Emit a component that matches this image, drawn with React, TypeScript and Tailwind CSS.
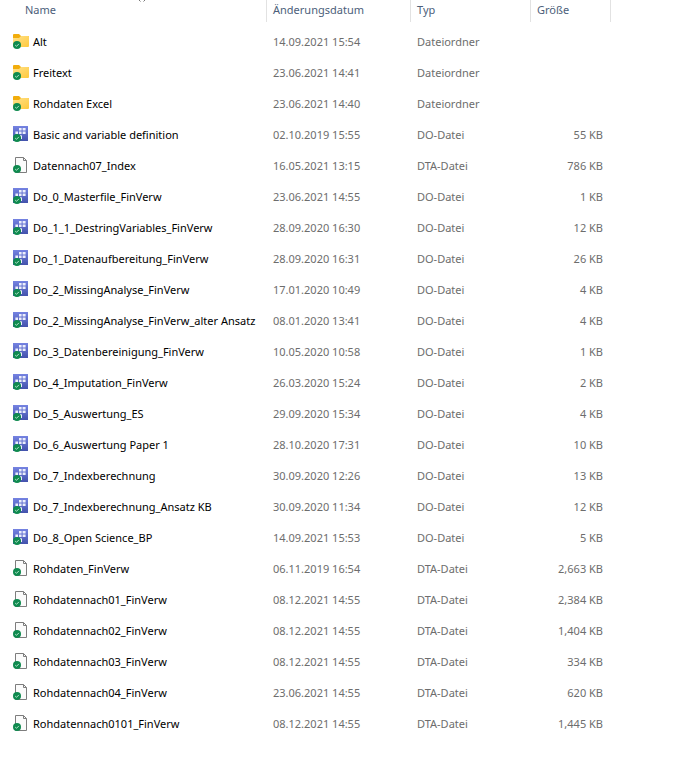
import React from "react";

type Kind = "folder" | "do" | "dta";

interface Entry {
  name: string;
  date: string;
  kind: Kind;
  size?: string;
}

const typeLabel: Record<Kind, string> = {
  folder: "Dateiordner",
  do: "DO-Datei",
  dta: "DTA-Datei",
};

const entries: Entry[] = [
  { name: "Alt", date: "14.09.2021 15:54", kind: "folder" },
  { name: "Freitext", date: "23.06.2021 14:41", kind: "folder" },
  { name: "Rohdaten Excel", date: "23.06.2021 14:40", kind: "folder" },
  { name: "Basic and variable definition", date: "02.10.2019 15:55", kind: "do", size: "55 KB" },
  { name: "Datennach07_Index", date: "16.05.2021 13:15", kind: "dta", size: "786 KB" },
  { name: "Do_0_Masterfile_FinVerw", date: "23.06.2021 14:55", kind: "do", size: "1 KB" },
  { name: "Do_1_1_DestringVariables_FinVerw", date: "28.09.2020 16:30", kind: "do", size: "12 KB" },
  { name: "Do_1_Datenaufbereitung_FinVerw", date: "28.09.2020 16:31", kind: "do", size: "26 KB" },
  { name: "Do_2_MissingAnalyse_FinVerw", date: "17.01.2020 10:49", kind: "do", size: "4 KB" },
  { name: "Do_2_MissingAnalyse_FinVerw_alter Ansatz", date: "08.01.2020 13:41", kind: "do", size: "4 KB" },
  { name: "Do_3_Datenbereinigung_FinVerw", date: "10.05.2020 10:58", kind: "do", size: "1 KB" },
  { name: "Do_4_Imputation_FinVerw", date: "26.03.2020 15:24", kind: "do", size: "2 KB" },
  { name: "Do_5_Auswertung_ES", date: "29.09.2020 15:34", kind: "do", size: "4 KB" },
  { name: "Do_6_Auswertung Paper 1", date: "28.10.2020 17:31", kind: "do", size: "10 KB" },
  { name: "Do_7_Indexberechnung", date: "30.09.2020 12:26", kind: "do", size: "13 KB" },
  { name: "Do_7_Indexberechnung_Ansatz KB", date: "30.09.2020 11:34", kind: "do", size: "12 KB" },
  { name: "Do_8_Open Science_BP", date: "14.09.2021 15:53", kind: "do", size: "5 KB" },
  { name: "Rohdaten_FinVerw", date: "06.11.2019 16:54", kind: "dta", size: "2,663 KB" },
  { name: "Rohdatennach01_FinVerw", date: "08.12.2021 14:55", kind: "dta", size: "2,384 KB" },
  { name: "Rohdatennach02_FinVerw", date: "08.12.2021 14:55", kind: "dta", size: "1,404 KB" },
  { name: "Rohdatennach03_FinVerw", date: "08.12.2021 14:55", kind: "dta", size: "334 KB" },
  { name: "Rohdatennach04_FinVerw", date: "23.06.2021 14:55", kind: "dta", size: "620 KB" },
  { name: "Rohdatennach0101_FinVerw", date: "08.12.2021 14:55", kind: "dta", size: "1,445 KB" },
];

function SyncBadge() {
  return (
    <g>
      <circle cx="4" cy="12" r="4" fill="#0f8a4f" />
      <path d="M2.2 12.1 3.5 13.3 5.9 10.9" fill="none" stroke="#c4ecd5" strokeWidth="0.9" />
    </g>
  );
}

function FileIcon({ kind }: { kind: Kind }) {
  return (
    <svg viewBox="0 0 16 16" className="h-4 w-4 shrink-0" aria-hidden="true">
      {kind === "folder" && (
        <>
          <defs>
            <linearGradient id="folderFront" x1="0" y1="0" x2="1" y2="1">
              <stop offset="0" stopColor="#ffe28c" />
              <stop offset="1" stopColor="#ffc93c" />
            </linearGradient>
          </defs>
          <path d="M0 2Q0 1 1 1H6L8 3H15Q16 3 16 4V12H0Z" fill="#f2ad0c" />
          <path d="M0 5H6L8 3H15Q16 3 16 4V13Q16 14 15 14H1Q0 14 0 13Z" fill="url(#folderFront)" />
        </>
      )}
      {kind === "do" && (
        <>
          <defs>
            <linearGradient id="doTile" x1="0" y1="0" x2="0" y2="1">
              <stop offset="0" stopColor="#7583e2" />
              <stop offset="1" stopColor="#4352ac" />
            </linearGradient>
          </defs>
          <path d="M0 0H15V15H0Z" fill="url(#doTile)" />
          <path
            d="M6 2H8.6V4.6H6ZM9.6 2H12.6V4.6H9.6ZM2.4 5.4H5V8H2.4ZM6 5.4H8.6V8H6ZM9.6 5.4H12.6V8H9.6ZM6 9H8.6V11H6ZM8 10H9V13H8Z"
            fill="#eceefb"
          />
        </>
      )}
      {kind === "dta" && (
        <>
          <path d="M2.5.5H10.5L13.5 3.5V15.5H2.5Z" fill="#fbfbfb" stroke="#7d7d7d" />
          <path d="M10.5.5V3.5H13.5" fill="none" stroke="#7d7d7d" />
        </>
      )}
      <SyncBadge />
    </svg>
  );
}

function ColumnHeader({ label, sorted = false }: { label: string; sorted?: boolean }) {
  return (
    <th scope="col" aria-sort={sorted ? "ascending" : undefined} className="p-0 pb-1 text-left font-normal">
      <button
        type="button"
        className={`relative block h-[22px] w-full border-r border-[#e2e2e2] pb-0.5 text-left text-[#4c607a] ${
          sorted ? "pl-[25px]" : "pl-1.5"
        }`}
      >
        {label}
        {sorted && (
          <svg viewBox="0 0 8 2" className="absolute top-0 left-[138px] h-0.5 w-2" aria-hidden="true">
            <path d="M1 0 2.5 1.5M7 0 5.5 1.5" fill="none" stroke="#777777" />
          </svg>
        )}
      </button>
    </th>
  );
}

export default function App() {
  return (
    <main className="min-h-screen overflow-x-auto bg-white font-['Noto_Sans','Open_Sans',sans-serif] text-[11px] leading-5">
      <table className="w-full table-fixed border-separate border-spacing-0 whitespace-nowrap text-[#6d6d6d]">
        <colgroup>
          <col className="w-[267px]" />
          <col className="w-36" />
          <col className="w-[120px]" />
          <col className="w-20" />
          <col />
        </colgroup>
        <thead>
          <tr>
            <ColumnHeader label="Name" sorted />
            <ColumnHeader label="Änderungsdatum" />
            <ColumnHeader label="Typ" />
            <ColumnHeader label="Größe" />
            <td />
          </tr>
        </thead>
        <tbody>
          {entries.map((entry) => (
            <tr key={entry.name} className="h-[31px]">
              <td className="p-0 pb-px pl-[13px]">
                <div className="flex items-center gap-1 text-black">
                  <FileIcon kind={entry.kind} />
                  <span className="pt-0.5">{entry.name}</span>
                </div>
              </td>
              <td className="p-0 pt-px pl-1.5">{entry.date}</td>
              <td className="p-0 pt-px pl-1.5">{typeLabel[entry.kind]}</td>
              <td className="p-0 pt-px pr-2 text-right">{entry.size}</td>
              <td />
            </tr>
          ))}
        </tbody>
      </table>
    </main>
  );
}
